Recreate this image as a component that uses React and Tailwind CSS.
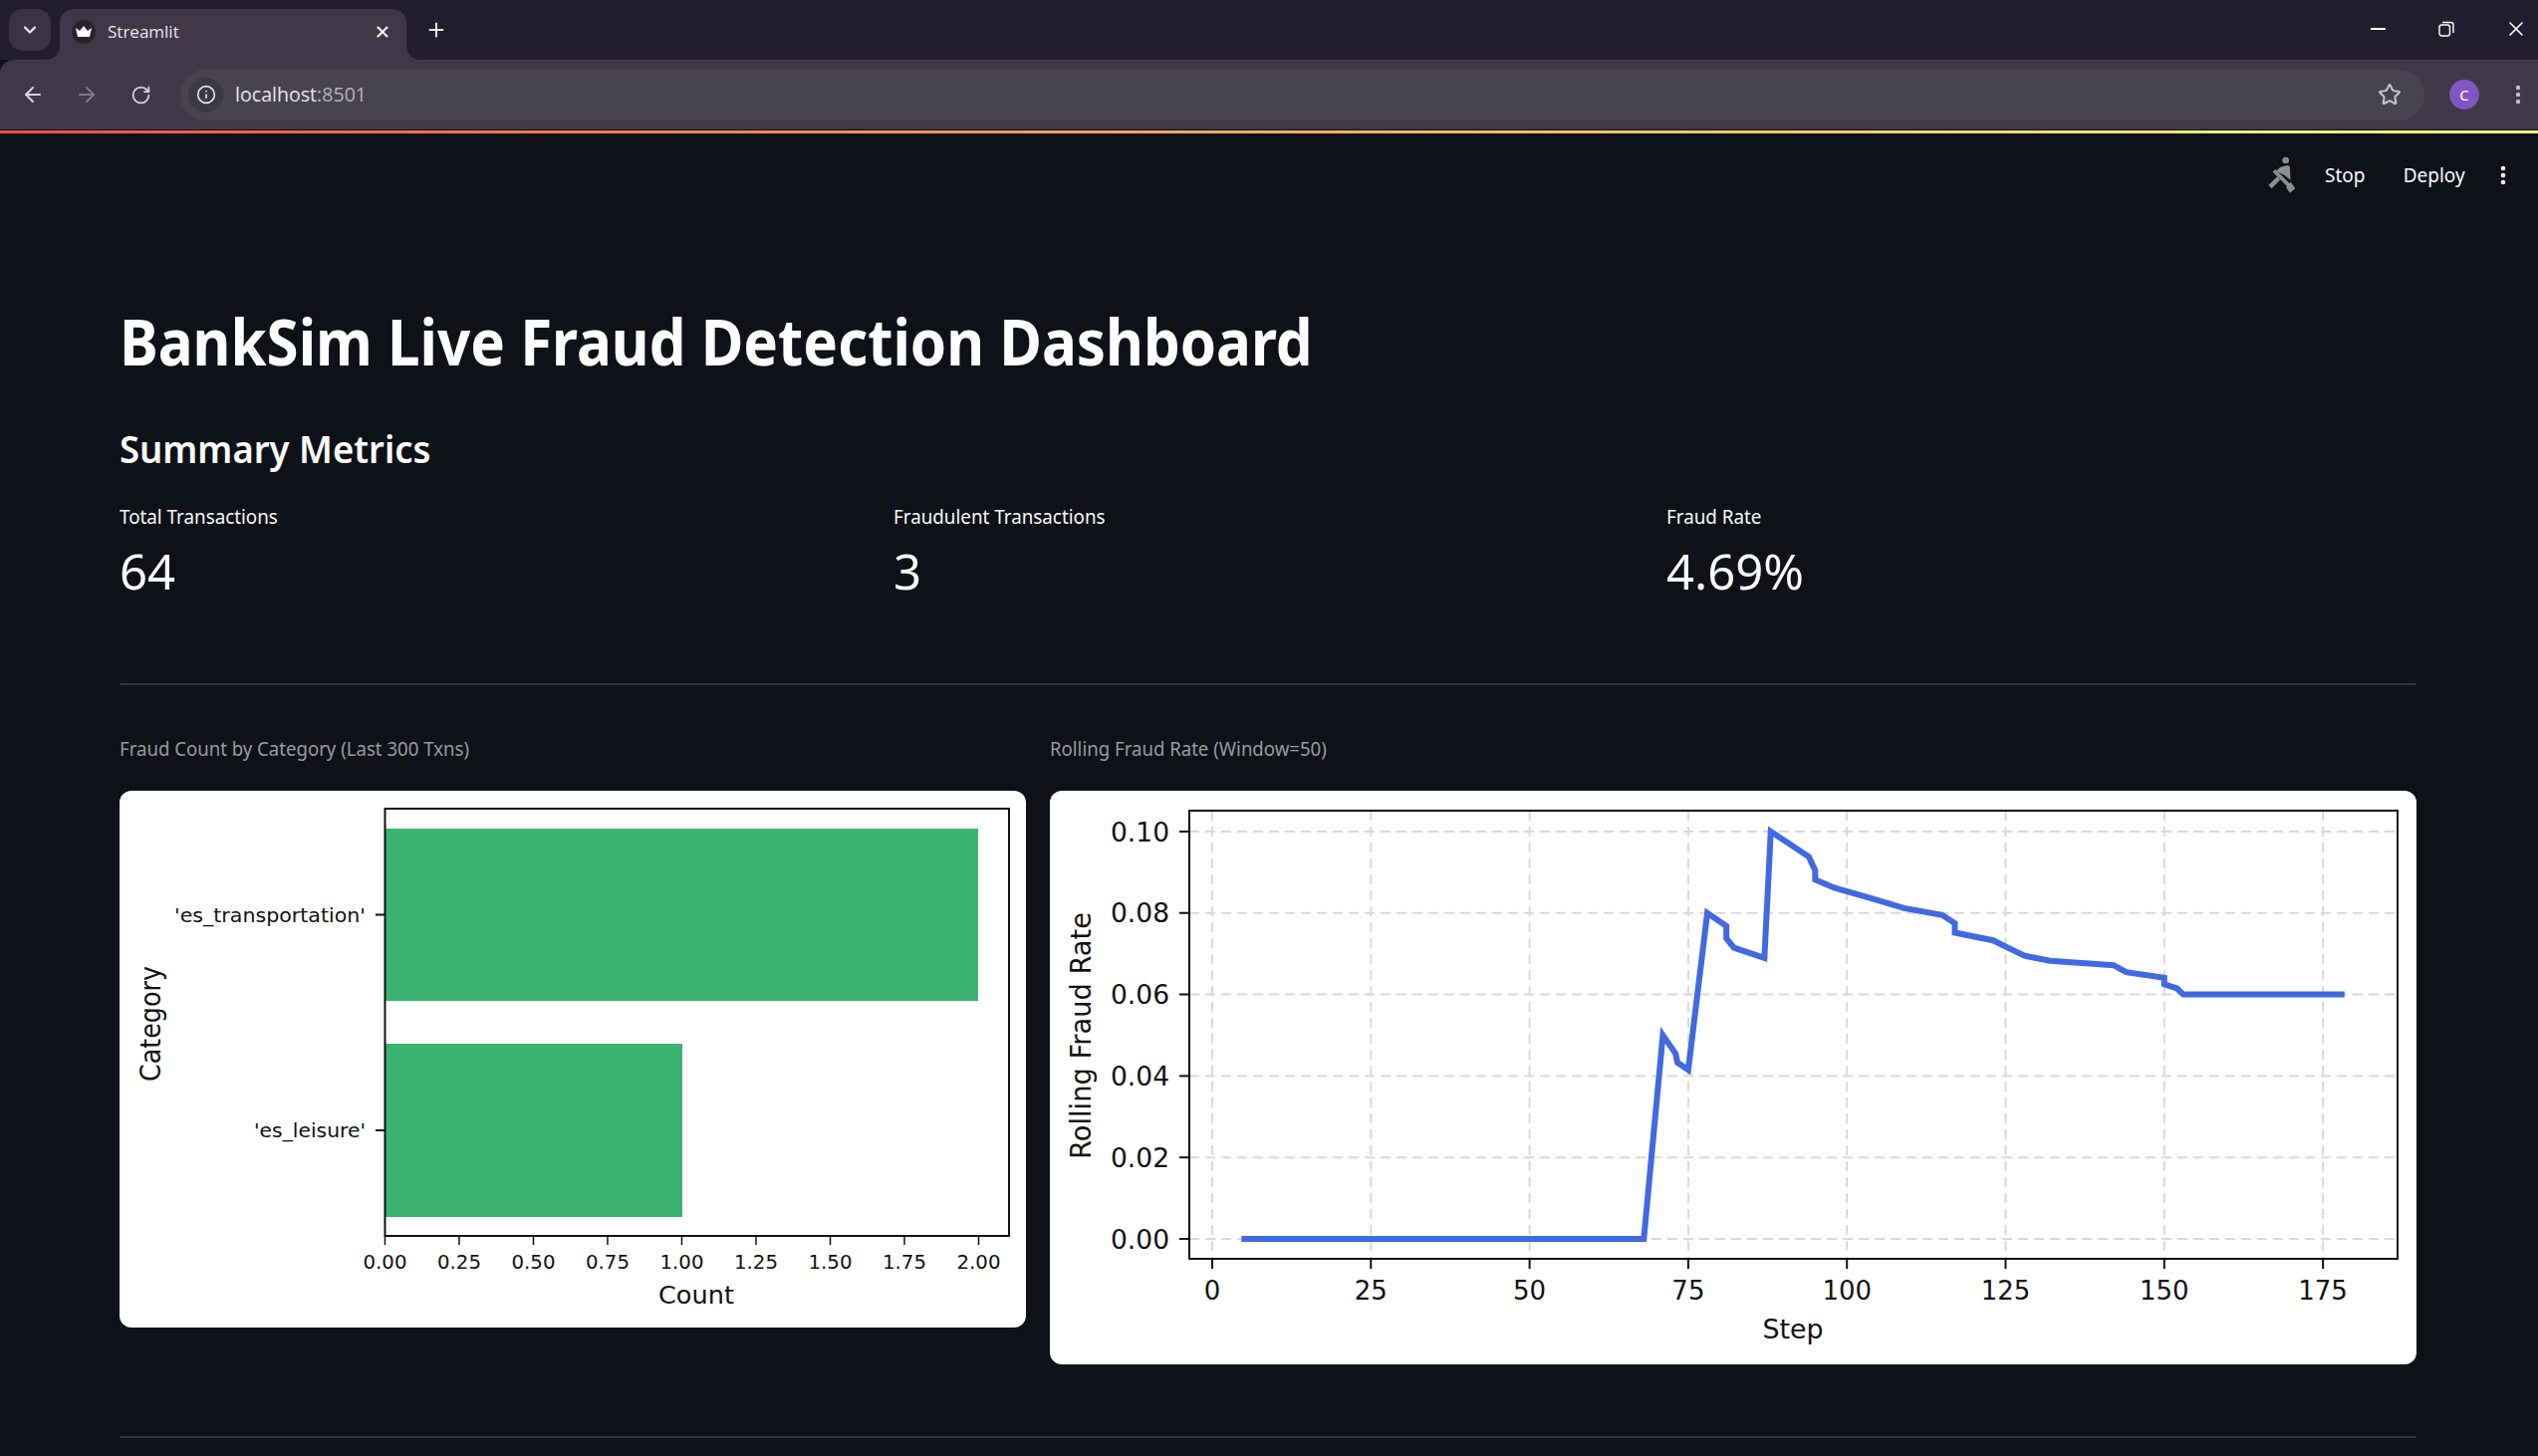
import React from "react";
import { ChevronDown, X, Plus, ArrowLeft, ArrowRight, RotateCw, Info, Star, EllipsisVertical } from "lucide-react";

const BAR_TICKS = ["0.00", "0.25", "0.50", "0.75", "1.00", "1.25", "1.50", "1.75", "2.00"];
const DJ = "'DejaVu Sans', sans-serif";

function BarChart() {
  return (
    <svg viewBox="0 0 910 539" className="block w-full h-full">
      <rect x="267" y="38" width="595" height="173" fill="#3cb371" />
      <rect x="267" y="254" width="298" height="174" fill="#3cb371" />
      <rect x="266.5" y="18" width="626.5" height="429" fill="none" stroke="#111" strokeWidth="2" />
      {BAR_TICKS.map((t, i) => (
        <g key={t}>
          <line x1={266.5 + 74.5 * i} x2={266.5 + 74.5 * i} y1="447" y2="456" stroke="#111" strokeWidth="1.5" />
          <text x={266.5 + 74.5 * i} y="480" textAnchor="middle" fontSize="20" fontFamily={DJ} fill="#111" textLength="44" lengthAdjust="spacingAndGlyphs">{t}</text>
        </g>
      ))}
      <line x1="257" x2="266" y1="124.5" y2="124.5" stroke="#111" strokeWidth="2" />
      <line x1="257" x2="266" y1="341" y2="341" stroke="#111" strokeWidth="2" />
      <text x="247" y="132" textAnchor="end" fontSize="20" fontFamily={DJ} fill="#111" textLength="192" lengthAdjust="spacingAndGlyphs">'es_transportation'</text>
      <text x="247" y="348" textAnchor="end" fontSize="20" fontFamily={DJ} fill="#111" textLength="112" lengthAdjust="spacingAndGlyphs">'es_leisure'</text>
      <text x="579" y="515" textAnchor="middle" fontSize="25" fontFamily={DJ} fill="#111" textLength="76" lengthAdjust="spacingAndGlyphs">Count</text>
      <text transform="translate(41 234) rotate(-90)" textAnchor="middle" fontSize="28" fontFamily={DJ} fill="#111" textLength="116" lengthAdjust="spacingAndGlyphs">Category</text>
    </svg>
  );
}

const LINE = [[4.6,0],[68,0],[71,.05],[73,.0455],[73.3,.0433],[75,.0415],[78,.08],[81,.0768],[81,.0738],[82.2,.0715],[87,.069],[88,.1],[94,.0938],[95,.0905],[95,.0882],[98,.0862],[104,.0835],[109,.0812],[115,.0795],[117,.0775],[117,.0752],[123,.0733],[126,.071],[128,.0695],[132,.0683],[142,.0672],[144,.0655],[150,.0641],[150,.0625],[152,.0615],[153,.06],[178.4,.06]];
const px = (s) => 163 + 6.372 * s;
const py = (v) => 450 - 4090 * v;

function LineChart() {
  const xt = [0, 25, 50, 75, 100, 125, 150, 175];
  const yt = [0, 0.02, 0.04, 0.06, 0.08, 0.1];
  return (
    <svg viewBox="0 0 1372 576" className="block w-full h-full">
      {xt.map((t) => (
        <g key={t}>
          <line x1={px(t)} x2={px(t)} y1="20" y2="470" stroke="#d9d9d9" strokeWidth="2" strokeDasharray="10 6" />
          <line x1={px(t)} x2={px(t)} y1="470" y2="480" stroke="#111" strokeWidth="2" />
          <text x={px(t)} y="511" textAnchor="middle" fontSize="26" fontFamily={DJ} fill="#111">{t}</text>
        </g>
      ))}
      {yt.map((t) => (
        <g key={t}>
          <line x1="140" x2="1353" y1={py(t)} y2={py(t)} stroke="#d9d9d9" strokeWidth="2" strokeDasharray="10 6" />
          <line x1="130" x2="140" y1={py(t)} y2={py(t)} stroke="#111" strokeWidth="2" />
          <text x="120" y={py(t) + 9.5} textAnchor="end" fontSize="26" fontFamily={DJ} fill="#111" textLength="59" lengthAdjust="spacingAndGlyphs">{t.toFixed(2)}</text>
        </g>
      ))}
      <rect x="140" y="20" width="1213" height="450" fill="none" stroke="#111" strokeWidth="2" />
      <polyline points={LINE.map(([s, v]) => `${px(s)},${py(v)}`).join(" ")} fill="none" stroke="#4169e1" strokeWidth="6" strokeLinejoin="miter" />
      <text x="746" y="550" textAnchor="middle" fontSize="27" fontFamily={DJ} fill="#111" textLength="61" lengthAdjust="spacingAndGlyphs">Step</text>
      <text transform="translate(41 246) rotate(-90)" textAnchor="middle" fontSize="28" fontFamily={DJ} fill="#111" textLength="248" lengthAdjust="spacingAndGlyphs">Rolling Fraud Rate</text>
    </svg>
  );
}

function Crown() {
  return (
    <svg viewBox="0 0 24 24" className="w-[24px] h-[24px]">
      <circle cx="12" cy="12" r="12" fill="#26252c" />
      <path d="M4 8 L8 11 L12 6 L16 11 L20 8 L18 17 L6 17 Z" fill="#fff" />
    </svg>
  );
}

function Runner() {
  return (
    <svg viewBox="0 0 84 120" className="w-[28px] h-[40px]" fill="#8f8f8f">
      <circle cx="53" cy="15" r="10" />
      <path d="M36 36 L58 30 Q66 30 66 38 L67 74 L50 60 L24 48 Z" />
      <path d="M14 50 L22 42 L68 88 L60 96 Z" />
      <path d="M54 96 L68 80 L82 100 L66 113 Z" />
      <path d="M1 90 L28 64 L36 74 L11 100 Z" />
    </svg>
  );
}

function Restore() {
  return (
    <svg viewBox="0 0 16 16" className="w-[16px] h-[16px]" fill="none" stroke="#fff" strokeWidth="1.4">
      <rect x="1" y="4" width="10.5" height="11" rx="2.4" />
      <path d="M4 1.5 H12.5 A2.5 2.5 0 0 1 15 4 V12" />
    </svg>
  );
}

function Metric({ label, value }) {
  return (
    <div>
      <div className="mt-[2px] h-[28px] leading-[28px] text-[20px] text-[#fafafa] origin-left scale-x-[.94] whitespace-nowrap">{label}</div>
      <div className="mt-[12px] h-[56px] leading-[56px] text-[50px] text-[#fafafa] origin-left scale-x-[.98] whitespace-nowrap">{value}</div>
    </div>
  );
}

export default function App() {
  return (
    <div className="w-[2548px] h-[1462px] overflow-hidden bg-[#0e1117] font-['Noto_Sans',sans-serif]">
      <div className="h-[60px] bg-[#231e2e] flex pl-[9px] text-white">
        <div className="mt-[9px] w-[42px] h-[42px] rounded-[14px] bg-[#3a3445] flex items-center justify-center">
          <ChevronDown size={20} strokeWidth={2.6} className="text-[#e8e6ec]" />
        </div>
        <div className="relative mt-[9px] ml-[9px] w-[348px] h-[51px] bg-[#403849] rounded-t-[14px] flex items-center pl-[12px] pb-[6px]">
          <Crown />
          <span className="ml-[12px] text-[17px] text-[#e8e6ec] font-['Open_Sans',sans-serif] whitespace-nowrap">Streamlit</span>
          <X size={18} strokeWidth={2.8} className="ml-auto mr-[15px] text-[#f0eef2]" />
          <svg viewBox="0 0 14 14" className="absolute left-[-14px] bottom-0 w-[14px] h-[14px]"><path d="M14 0 V14 H0 A14 14 0 0 0 14 0 Z" fill="#403849" /></svg>
          <svg viewBox="0 0 14 14" className="absolute right-[-14px] bottom-0 w-[14px] h-[14px]"><path d="M0 0 V14 H14 A14 14 0 0 1 0 0 Z" fill="#403849" /></svg>
        </div>
        <Plus size={22} strokeWidth={2.2} className="mt-[19px] ml-[19px] text-[#e8e6ec]" />
        <div className="ml-auto mt-[18px] h-[22px] flex items-center">
          <div className="w-[15px] h-[2px] bg-white"></div>
          <div className="ml-[53px]"><Restore /></div>
          <X size={24} strokeWidth={1.6} className="ml-[50px] mr-[10px] text-white" />
        </div>
      </div>

      <div className="h-[70px] bg-[#403849] rounded-tl-[14px] flex items-center pl-[21px]">
        <ArrowLeft size={24} strokeWidth={2} className="text-[#d8d4de]" />
        <ArrowRight size={24} strokeWidth={2} className="ml-[30px] text-[#7f7888]" />
        <RotateCw size={21} strokeWidth={2} className="ml-[32px] text-[#d8d4de]" />
        <div className="ml-[29px] w-[2253px] h-[51px] rounded-full bg-[#48444f] flex items-center pl-[8px] pr-[22px]">
          <div className="w-[35px] h-[35px] rounded-full bg-[#3d3944] flex items-center justify-center">
            <Info size={20} strokeWidth={2} className="text-[#e4e1e8]" />
          </div>
          <span className="ml-[12px] text-[20px] text-[#e8e6ec] font-['Open_Sans',sans-serif] origin-left scale-x-[.98]">localhost<span className="text-[#b6b2bc]">:8501</span></span>
          <Star size={24} strokeWidth={2} className="ml-auto mr-[1px] text-[#c9c5cf]" />
        </div>
        <div className="ml-[25px] w-[30px] h-[30px] rounded-full bg-[#7e57c2] flex items-center justify-center text-[15px] text-white">C</div>
        <EllipsisVertical size={24} strokeWidth={2.4} className="ml-[27px] text-[#c9bfd6]" />
      </div>

      <div className="h-[3px] mt-[1px] bg-gradient-to-r from-[#ff4b4b] to-[#fffd80]"></div>

      <div className="h-[83px] flex items-center justify-end pr-[23px] text-[#fafafa] text-[20px]">
        <Runner />
        <span className="ml-[28px] origin-center scale-x-[.95]">Stop</span>
        <span className="ml-[35px] origin-center scale-x-[.95]">Deploy</span>
        <EllipsisVertical size={24} strokeWidth={2.6} className="ml-[25px]" />
      </div>

      <div className="pl-[120px] w-[2426px] box-content">
        <h1 className="mt-[86px] h-[80px] leading-[80px] text-[64px] font-bold text-white origin-left scale-x-[.91] whitespace-nowrap">BankSim Live Fraud Detection Dashboard</h1>
        <h3 className="mt-[41px] h-[52px] leading-[52px] text-[38px] font-semibold text-white origin-left scale-x-[.96] whitespace-nowrap">Summary Metrics</h3>
        <div className="mt-[27px] grid grid-cols-[777px_776px_1fr]">
          <Metric label="Total Transactions" value="64" />
          <Metric label="Fraudulent Transactions" value="3" />
          <Metric label="Fraud Rate" value="4.69%" />
        </div>
        <div className="mt-[85px] w-[2306px] h-[2px] bg-[#33363d]"></div>
        <div className="mt-[50px] w-[2306px] grid grid-cols-[910px_1372px] gap-x-[24px] items-start">
          <div>
            <div className="h-[28px] leading-[28px] text-[20px] text-[#9a9c9f] origin-left scale-x-[.93] whitespace-nowrap">Fraud Count by Category (Last 300 Txns)</div>
            <div className="mt-[28px] h-[539px] bg-white rounded-[12px] overflow-hidden"><BarChart /></div>
          </div>
          <div>
            <div className="h-[28px] leading-[28px] text-[20px] text-[#9a9c9f] origin-left scale-x-[.93] whitespace-nowrap">Rolling Fraud Rate (Window=50)</div>
            <div className="mt-[28px] h-[576px] bg-white rounded-[12px] overflow-hidden"><LineChart /></div>
          </div>
        </div>
        <div className="mt-[72px] w-[2306px] h-[2px] bg-[#33363d]"></div>
      </div>
    </div>
  );
}
